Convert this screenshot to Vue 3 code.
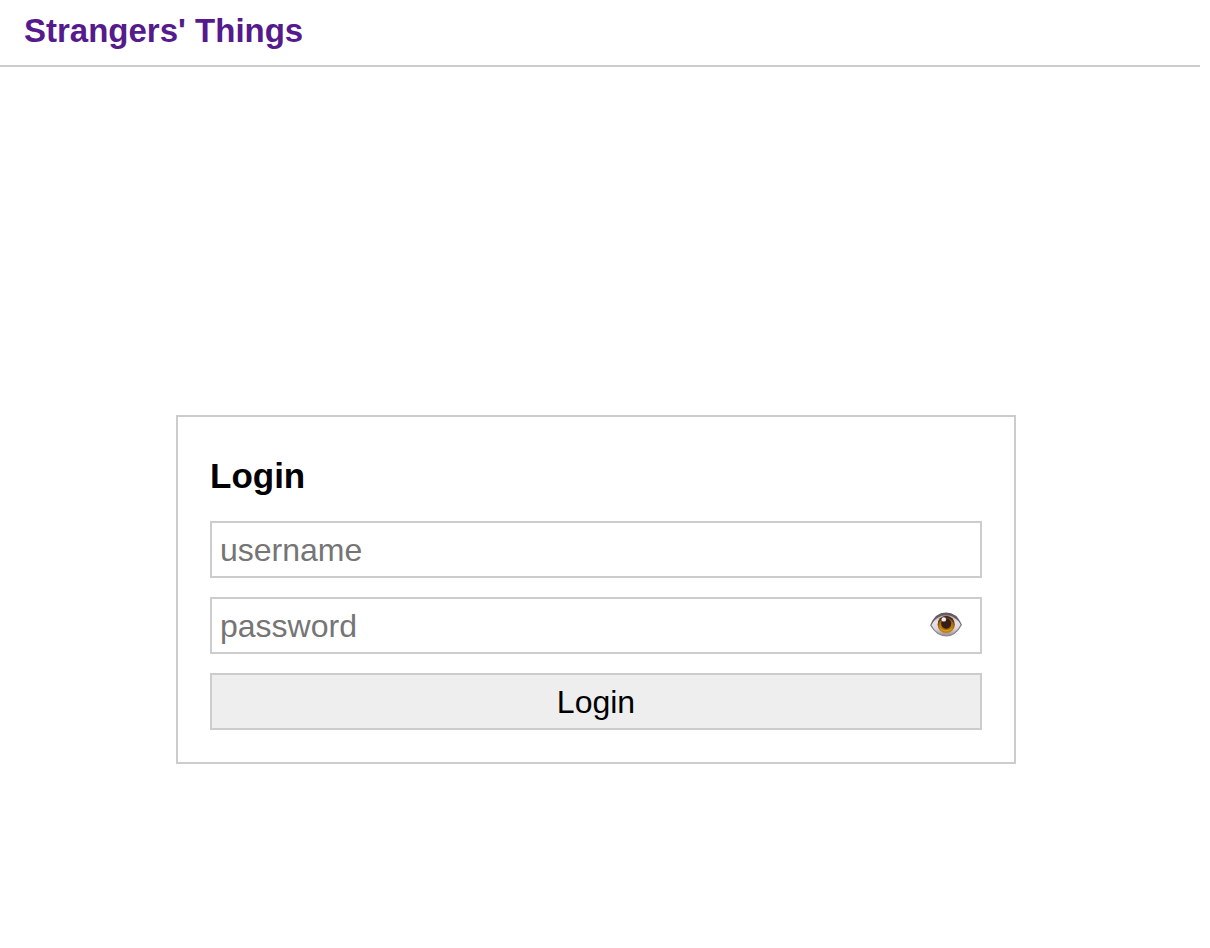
<script setup>
import { ref } from 'vue'

const username = ref('')
const password = ref('')
const visible = ref(false)
</script>

<template>
  <div class="page">
    <header class="bar">
      <a class="brand" href="#">Strangers' Things</a>
    </header>
    <main class="content">
      <form class="card" @submit.prevent>
        <h1 class="title">Login</h1>
        <input v-model="username" class="field" type="text" placeholder="username" aria-label="username" />
        <div class="secret">
          <input
            v-model="password"
            class="field with-eye"
            :type="visible ? 'text' : 'password'"
            placeholder="password"
            aria-label="password"
          />
          <button class="eye" type="button" aria-label="Show password" @click="visible = !visible">
            <svg viewBox="0 0 32 26" width="32" height="26" aria-hidden="true">
              <defs>
                <linearGradient id="white" x1="0" y1="0" x2="0" y2="1">
                  <stop offset="0" stop-color="#9d959c" />
                  <stop offset="0.4" stop-color="#e9e4e9" />
                  <stop offset="0.7" stop-color="#dcd5dc" />
                  <stop offset="1" stop-color="#94898f" />
                </linearGradient>
                <radialGradient id="iris" cx="0.5" cy="0.65" r="0.55">
                  <stop offset="0" stop-color="#8a5408" />
                  <stop offset="0.6" stop-color="#bd7f0c" />
                  <stop offset="0.82" stop-color="#a0660c" />
                  <stop offset="1" stop-color="#4a2a12" />
                </radialGradient>
                <linearGradient id="lid" x1="0" y1="0" x2="0" y2="1">
                  <stop offset="0" stop-color="#5b5157" />
                  <stop offset="0.6" stop-color="#82777e" />
                  <stop offset="1" stop-color="#91868d" />
                </linearGradient>
              </defs>
              <path
                d="M.8 13.200C4 5 9.500 1 16 1s12.300 4.500 15.300 11.700C27.500 20 22.500 23.800 16.500 23.800S4.500 20 .8 13.200Z"
                fill="url(#white)"
                stroke="url(#lid)"
                stroke-width="1.200"
              />
              <path
                d="M1 13C4 5 9.500 1 16 1s12.300 4.500 15 11.300C27 6.500 22 3.200 16 3.200S5 6.500 1 13Z"
                fill="#675b62"
              />
              <circle cx="16.200" cy="12.400" r="8.600" fill="url(#iris)" />
              <path d="M9 14.500a7.600 7.600 0 0 0 14.400 0c-2.400 4.500-12 4.500-14.400 0Z" fill="#d99a12" />
              <circle cx="16.200" cy="11.600" r="5.100" fill="#351d1a" />
              <ellipse cx="13.800" cy="7.400" rx="2.300" ry="2.200" fill="#fff" opacity="0.92" />
            </svg>
          </button>
        </div>
        <button class="submit" type="submit">Login</button>
      </form>
    </main>
  </div>
</template>

<style>
body {
  margin: 0;
  background: #fff;
}
</style>

<style scoped>
.page {
  font-family: "Liberation Sans", Arial, sans-serif;
  color: #000;
}

.bar {
  margin-right: 10px;
  padding: 0 24px 4px;
  border-bottom: 2px solid #ccc;
}

.brand {
  display: block;
  font-size: 33px;
  font-weight: 700;
  line-height: 61px;
  color: #551a8b;
  text-decoration: none;
}

.content {
  display: flex;
  justify-content: center;
  padding: 348px 18px 32px 0;
}

.card {
  display: flex;
  flex-direction: column;
  gap: 19px;
  box-sizing: border-box;
  width: 100%;
  max-width: 840px;
  padding: 32px;
  border: 2px solid #ccc;
}

.title {
  margin: 0;
  font-size: 35px;
  line-height: 53px;
}

.field,
.submit {
  display: block;
  box-sizing: border-box;
  width: 100%;
  height: 57px;
  margin: 0;
  padding: 2px 8px 0;
  border: 2px solid #ccc;
  border-radius: 0;
  background: #fff;
  color: #000;
  font-family: inherit;
  font-size: 32px;
}

.field::placeholder {
  color: #757575;
  opacity: 1;
}

.secret {
  position: relative;
}

.field.with-eye {
  padding-right: 60px;
}

.eye {
  position: absolute;
  top: 15px;
  right: 20px;
  display: block;
  padding: 0;
  border: 0;
  background: none;
  cursor: pointer;
}

.eye svg {
  display: block;
}

.submit {
  background: #eee;
  cursor: pointer;
}
</style>
